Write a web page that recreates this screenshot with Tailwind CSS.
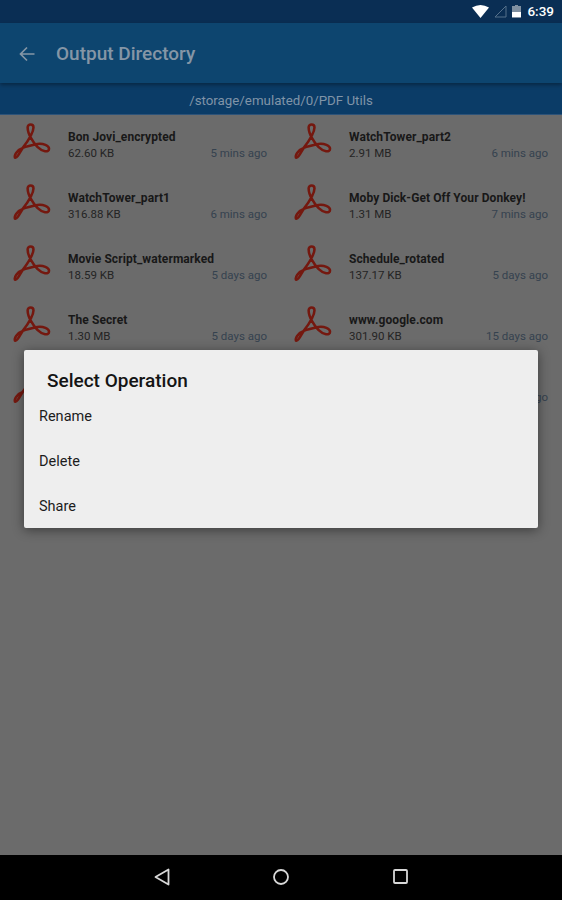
<!DOCTYPE html>
<html>
<head>
<meta charset="utf-8">
<script src="https://cdn.jsdelivr.net/npm/@tailwindcss/browser@4"></script>
</head>
<body class="bg-[#6b6b6b] font-['Roboto',sans-serif]">
<svg class="hidden"><symbol id="pdf" viewBox="0 0 38 38" overflow="visible"><path d="M14 4C14 0 20 0 20 4C20 10 15 17 9 25C6 30 3 36 1 35C0 33 3 27 9 25C14 23 19 22 24 21C30 20 36 23 36 26C36 30 29 29 24 24C20 20 14 11 14 4Z" fill="none" stroke="#74180f" stroke-width="2.600"/></symbol></svg>
<div class="relative w-[562px] h-[900px] overflow-hidden flex flex-col">
  <div class="h-[23px] bg-[#0a2e54] flex items-center justify-end pr-[8px] gap-[5px]">
    <svg width="17" height="13" viewBox="0 0 17 13"><path d="M0 2.500Q8.500-2.500 17 2.500L8.500 13Z" fill="#fff"/></svg>
    <svg width="13" height="13" viewBox="0 0 13 13"><path d="M12 1V12H1Z" fill="none" stroke="#55708a" stroke-width="1"/></svg>
    <svg width="9" height="13" viewBox="0 0 9 13"><path d="M3 0H6V1H9V13H0V1H3Z" fill="#7f8fa0"/><path d="M0 7H9V12H0Z" fill="#fff"/></svg>
    <span class="text-white text-[13.500px] font-medium ml-[1px]">6:39</span>
  </div>
  <div class="relative z-10 h-[60px] bg-[#0d456f] flex items-center pt-[2px] shadow-[0_2px_4px_rgba(0,0,0,0.35)]">
    <svg class="ml-[19px]" width="16" height="16" viewBox="0 0 16 16"><path d="M15.500 8H1.500M8 1.500L1.500 8L8 14.500" fill="none" stroke="#8596a6" stroke-width="1.700"/></svg>
    <span class="ml-[21px] text-[#8596a6] text-[19px] font-medium">Output Directory</span>
  </div>
  <div class="h-[32px] bg-[#0b3c67] flex items-center justify-center text-[#8094a8] text-[13.300px] pt-[4px] border-b border-[#2d5379]">/storage/emulated/0/PDF Utils</div>
  <div class="grid grid-cols-2 auto-rows-[61px]">
    <div class="flex gap-[17px] pl-[14px] pt-[8px]"><svg class="w-[37px] h-[38px] overflow-visible"><use href="#pdf"/></svg><div class="w-[199px] pt-[7px]"><div class="text-[12px] tracking-[0.08px] font-bold text-[#181818] leading-[15px]">Bon Jovi_encrypted</div><div class="flex justify-between text-[11.500px] leading-[15px] mt-[1px]"><span class="text-[#242424]">62.60 KB</span><span class="text-[#35424f]">5 mins ago</span></div></div></div>
    <div class="flex gap-[17px] pl-[14px] pt-[8px]"><svg class="w-[37px] h-[38px] overflow-visible"><use href="#pdf"/></svg><div class="w-[199px] pt-[7px]"><div class="text-[12px] tracking-[0.08px] font-bold text-[#181818] leading-[15px]">WatchTower_part2</div><div class="flex justify-between text-[11.500px] leading-[15px] mt-[1px]"><span class="text-[#242424]">2.91 MB</span><span class="text-[#35424f]">6 mins ago</span></div></div></div>
    <div class="flex gap-[17px] pl-[14px] pt-[8px]"><svg class="w-[37px] h-[38px] overflow-visible"><use href="#pdf"/></svg><div class="w-[199px] pt-[7px]"><div class="text-[12px] tracking-[0.08px] font-bold text-[#181818] leading-[15px]">WatchTower_part1</div><div class="flex justify-between text-[11.500px] leading-[15px] mt-[1px]"><span class="text-[#242424]">316.88 KB</span><span class="text-[#35424f]">6 mins ago</span></div></div></div>
    <div class="flex gap-[17px] pl-[14px] pt-[8px]"><svg class="w-[37px] h-[38px] overflow-visible"><use href="#pdf"/></svg><div class="w-[199px] pt-[7px]"><div class="text-[12px] tracking-[0.08px] font-bold text-[#181818] leading-[15px]">Moby Dick-Get Off Your Donkey!</div><div class="flex justify-between text-[11.500px] leading-[15px] mt-[1px]"><span class="text-[#242424]">1.31 MB</span><span class="text-[#35424f]">7 mins ago</span></div></div></div>
    <div class="flex gap-[17px] pl-[14px] pt-[8px]"><svg class="w-[37px] h-[38px] overflow-visible"><use href="#pdf"/></svg><div class="w-[199px] pt-[7px]"><div class="text-[12px] tracking-[0.08px] font-bold text-[#181818] leading-[15px]">Movie Script_watermarked</div><div class="flex justify-between text-[11.500px] leading-[15px] mt-[1px]"><span class="text-[#242424]">18.59 KB</span><span class="text-[#35424f]">5 days ago</span></div></div></div>
    <div class="flex gap-[17px] pl-[14px] pt-[8px]"><svg class="w-[37px] h-[38px] overflow-visible"><use href="#pdf"/></svg><div class="w-[199px] pt-[7px]"><div class="text-[12px] tracking-[0.08px] font-bold text-[#181818] leading-[15px]">Schedule_rotated</div><div class="flex justify-between text-[11.500px] leading-[15px] mt-[1px]"><span class="text-[#242424]">137.17 KB</span><span class="text-[#35424f]">5 days ago</span></div></div></div>
    <div class="flex gap-[17px] pl-[14px] pt-[8px]"><svg class="w-[37px] h-[38px] overflow-visible"><use href="#pdf"/></svg><div class="w-[199px] pt-[7px]"><div class="text-[12px] tracking-[0.08px] font-bold text-[#181818] leading-[15px]">The Secret</div><div class="flex justify-between text-[11.500px] leading-[15px] mt-[1px]"><span class="text-[#242424]">1.30 MB</span><span class="text-[#35424f]">5 days ago</span></div></div></div>
    <div class="flex gap-[17px] pl-[14px] pt-[8px]"><svg class="w-[37px] h-[38px] overflow-visible"><use href="#pdf"/></svg><div class="w-[199px] pt-[7px]"><div class="text-[12px] tracking-[0.08px] font-bold text-[#181818] leading-[15px]">www.google.com</div><div class="flex justify-between text-[11.500px] leading-[15px] mt-[1px]"><span class="text-[#242424]">301.90 KB</span><span class="text-[#35424f]">15 days ago</span></div></div></div>
    <div class="flex gap-[17px] pl-[14px] pt-[8px]"><svg class="w-[37px] h-[38px] overflow-visible"><use href="#pdf"/></svg></div>
    <div class="flex gap-[17px] pl-[14px] pt-[8px]"><svg class="w-[37px] h-[38px] overflow-visible"><use href="#pdf"/></svg><div class="w-[199px] pt-[7px]"><div class="text-[11.500px] leading-[15px] mt-[16px] text-right text-[#35424f]">15 days ago</div></div></div>
  </div>
  <div class="absolute left-0 top-[855px] w-full h-[45px] bg-black flex items-center">
    <svg class="absolute left-[153px] top-[12px]" width="18" height="20" viewBox="0 0 18 20"><path d="M15.500 2.500V17.500L2.500 10Z" fill="none" stroke="#d8d8d8" stroke-width="1.800" stroke-linejoin="round"/></svg>
    <svg class="absolute left-[272px] top-[13px]" width="18" height="18" viewBox="0 0 18 18"><circle cx="9" cy="9" r="7" fill="none" stroke="#d8d8d8" stroke-width="1.800"/></svg>
    <svg class="absolute left-[392px] top-[13px]" width="17" height="17" viewBox="0 0 17 17"><rect x="2" y="2" width="13" height="13" rx="1" fill="none" stroke="#d8d8d8" stroke-width="1.800"/></svg>
  </div>
  <div class="absolute left-[24px] top-[350px] w-[514px] h-[178px] bg-[#eeeeee] rounded-[2px] shadow-[0_2px_12px_rgba(0,0,0,0.45)] flex flex-col">
    <div class="h-[44px] pt-[19px] pl-[23px] text-[19px] font-medium leading-[24px] text-[#141414]">Select Operation</div>
    <div class="h-[45px] pl-[15px] pt-[13px] text-[14.500px] leading-[20px] text-[#1c1c1c]">Rename</div>
    <div class="h-[45px] pl-[15px] pt-[13px] text-[14.500px] leading-[20px] text-[#1c1c1c]">Delete</div>
    <div class="h-[44px] pl-[15px] pt-[13px] text-[14.500px] leading-[20px] text-[#1c1c1c]">Share</div>
  </div>
</div>
</body>
</html>
